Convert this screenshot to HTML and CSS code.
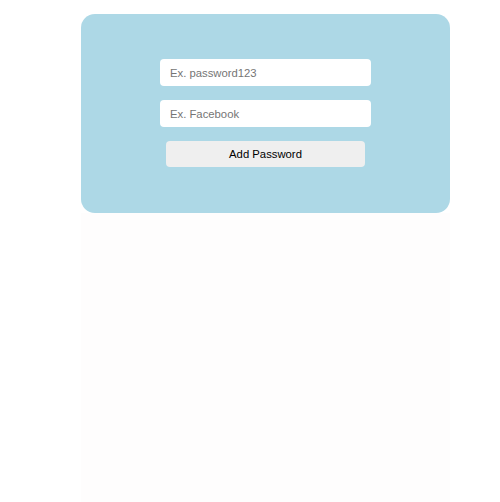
FILE: index.html
```html
<!DOCTYPE html>
<html lang="en">
<head>
    <meta charset="UTF-8">
    <meta name="viewport" content="width=device-width, initial-scale=1.0">
    <title>Password Manager</title>
    <link rel="stylesheet" href="styles.css">
</head>
<body>
    <main class="page">
        <section class="card">
            <form class="password-form">
                <input type="text" class="field" placeholder="Ex. password123">
                <input type="text" class="field" placeholder="Ex. Facebook">
                <button type="button" class="add-btn">Add Password</button>
            </form>
        </section>
        <div class="list"></div>
    </main>
</body>
</html>
```

FILE: styles.css
```css
body {
    margin: 0;
    padding: 0;
    background-color: #fff;
    font-family: 'Liberation Sans', Arial, sans-serif;
    overflow: hidden;
}

.page {
    padding: 14px 0 0 81px;
    height: 502px;
    box-sizing: border-box;
}

.card {
    width: 369px;
    height: 199px;
    box-sizing: border-box;
    background-color: #add8e6;
    border-radius: 14px;
    padding-top: 45px;
}

.password-form {
    display: flex;
    flex-direction: column;
    align-items: center;
    gap: 14px;
}

.field {
    width: 211px;
    height: 27px;
    box-sizing: border-box;
    border: none;
    border-radius: 4px;
    padding: 0 10px;
    font-family: inherit;
    font-size: 11.3px;
    color: #333;
    background-color: #fff;
    outline: none;
}

.field::placeholder {
    color: #757575;
}

.add-btn {
    width: 199px;
    height: 26px;
    border: none;
    border-radius: 4px;
    background-color: #efefef;
    color: #000;
    font-family: inherit;
    font-size: 11.3px;
    cursor: pointer;
}

.list {
    width: 369px;
    height: 289px;
    background-color: #fefdfd;
}
```
